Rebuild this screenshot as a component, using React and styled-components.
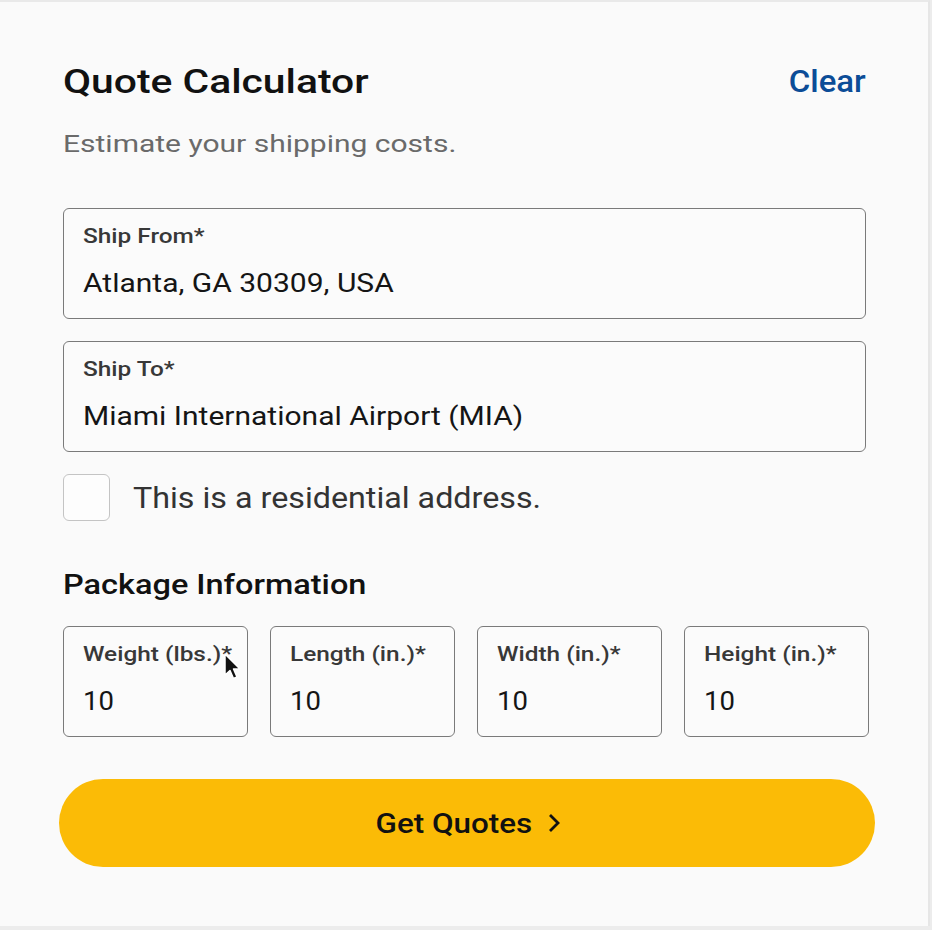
import React from "react";
import styled, { createGlobalStyle, css } from "styled-components";

const GlobalStyle = createGlobalStyle`
  html, body {
    margin: 0;
    padding: 0;
    background: #ececec;
  }
  body {
    font-family: Roboto, "Liberation Sans", Arial, sans-serif;
    -webkit-font-smoothing: antialiased;
  }
`;

// the type in this design is set noticeably wider than stock Roboto
const wide = (x, origin = "0 50%") => css`
  transform: scaleX(${x});
  transform-origin: ${origin};
`;

const Card = styled.div`
  box-sizing: border-box;
  width: 930px;
  height: 926px;
  background: #fafafa;
  border-top: 2px solid #e9e9e9;
  border-right: 2px solid #e6e6e6;
  padding: 59px 62px 0 63px;
  display: flex;
  flex-direction: column;
`;

const Header = styled.div`
  display: flex;
  align-items: center;
  justify-content: space-between;
`;

const Title = styled.h1`
  margin: 0;
  font-size: 34px;
  line-height: 40px;
  font-weight: 500;
  color: #111;
  ${wide(1.2)}
`;

const ClearLink = styled.button`
  border: 0;
  background: none;
  padding: 0;
  font-family: inherit;
  font-size: 32px;
  line-height: 40px;
  font-weight: 500;
  color: #0b4c97;
  cursor: pointer;
  ${wide(1.03, "100% 50%")}
`;

const Subtitle = styled.p`
  align-self: flex-start;
  margin: 28px 0 0;
  font-size: 24px;
  line-height: 30px;
  color: #6a6a6a;
  ${wide(1.25)}
`;

const Stack = styled.div`
  display: flex;
  flex-direction: column;
  gap: 22px;
  margin-top: 49px;
`;

const Field = styled.label`
  position: relative;
  box-sizing: border-box;
  height: 111px;
  border: 1.5px solid #7a7a7a;
  border-radius: 6px;
  padding: 14px 19px 0;
  display: flex;
  flex-direction: column;
  align-items: flex-start;
  gap: 19px;
  background: #fbfbfb;
`;

const FieldLabel = styled.span`
  display: inline-block;
  font-size: 20px;
  line-height: 26px;
  font-weight: 500;
  color: #383838;
  ${wide(1.22)}
`;

const FieldValue = styled.span`
  display: inline-block;
  font-size: 25px;
  line-height: 32px;
  color: #151515;
  ${({ $short }) => ($short ? wide(1.1) : wide(1.2))}
`;

const CheckRow = styled.div`
  display: flex;
  align-items: center;
  gap: 23px;
`;

const CheckBox = styled.span`
  box-sizing: border-box;
  width: 47px;
  height: 47px;
  border: 1.5px solid #c4c4c4;
  border-radius: 6px;
  background: #fdfdfd;
`;

const CheckText = styled.span`
  display: inline-block;
  font-size: 30px;
  line-height: 34px;
  color: #333;
  ${wide(1.075)}
`;

const SectionTitle = styled.h2`
  align-self: flex-start;
  margin: 48px 0 0;
  font-size: 28px;
  line-height: 32px;
  font-weight: 500;
  color: #111;
  ${wide(1.16)}
`;

const PackageGrid = styled.div`
  display: grid;
  grid-template-columns: repeat(4, 1fr);
  gap: 22px;
  margin: 25px -3px 0 0;
`;

const Cursor = styled.svg`
  position: absolute;
  left: 159px;
  top: 25px;
  width: 20px;
  height: 30px;
`;

const QuoteButton = styled.button`
  margin: 42px -9px 0 -4px;
  padding: 0 0 0 12px;
  height: 88px;
  border: 0;
  border-radius: 44px;
  background: #fbbb06;
  display: flex;
  align-items: center;
  justify-content: center;
  gap: 22px;
  font-family: inherit;
  color: #111;
  cursor: pointer;
`;

const ButtonText = styled.span`
  display: inline-block;
  font-size: 28px;
  font-weight: 500;
  ${wide(1.12, "50% 50%")}
`;

const packageFields = [
  { label: "Weight (lbs.)*", value: "10", cursor: true },
  { label: "Length (in.)*", value: "10" },
  { label: "Width (in.)*", value: "10" },
  { label: "Height (in.)*", value: "10" },
];

export default function App() {
  return (
    <>
      <GlobalStyle />
      <Card>
        <Header>
          <Title>Quote Calculator</Title>
          <ClearLink>Clear</ClearLink>
        </Header>
        <Subtitle>Estimate your shipping costs.</Subtitle>

        <Stack>
          <Field>
            <FieldLabel>Ship From*</FieldLabel>
            <FieldValue>Atlanta, GA 30309, USA</FieldValue>
          </Field>
          <Field>
            <FieldLabel>Ship To*</FieldLabel>
            <FieldValue>Miami International Airport (MIA)</FieldValue>
          </Field>
          <CheckRow>
            <CheckBox />
            <CheckText>This is a residential address.</CheckText>
          </CheckRow>
        </Stack>

        <SectionTitle>Package Information</SectionTitle>
        <PackageGrid>
          {packageFields.map((f) => (
            <Field key={f.label}>
              <FieldLabel>{f.label}</FieldLabel>
              <FieldValue $short>{f.value}</FieldValue>
              {f.cursor && (
                <Cursor viewBox="0 0 20 30">
                  <path
                    d="M2 2 L2 23 L7 18.5 L10.5 26.5 L14 25 L10.5 17 L17 17 Z"
                    fill="#111"
                    stroke="#fff"
                    strokeWidth="1.5"
                    strokeLinejoin="round"
                  />
                </Cursor>
              )}
            </Field>
          ))}
        </PackageGrid>

        <QuoteButton>
          <ButtonText>Get Quotes</ButtonText>
          <svg width="16" height="22" viewBox="0 0 16 22">
            <path
              d="M4 3 L12 11 L4 19"
              fill="none"
              stroke="#111"
              strokeWidth="2.8"
            />
          </svg>
        </QuoteButton>
      </Card>
    </>
  );
}
